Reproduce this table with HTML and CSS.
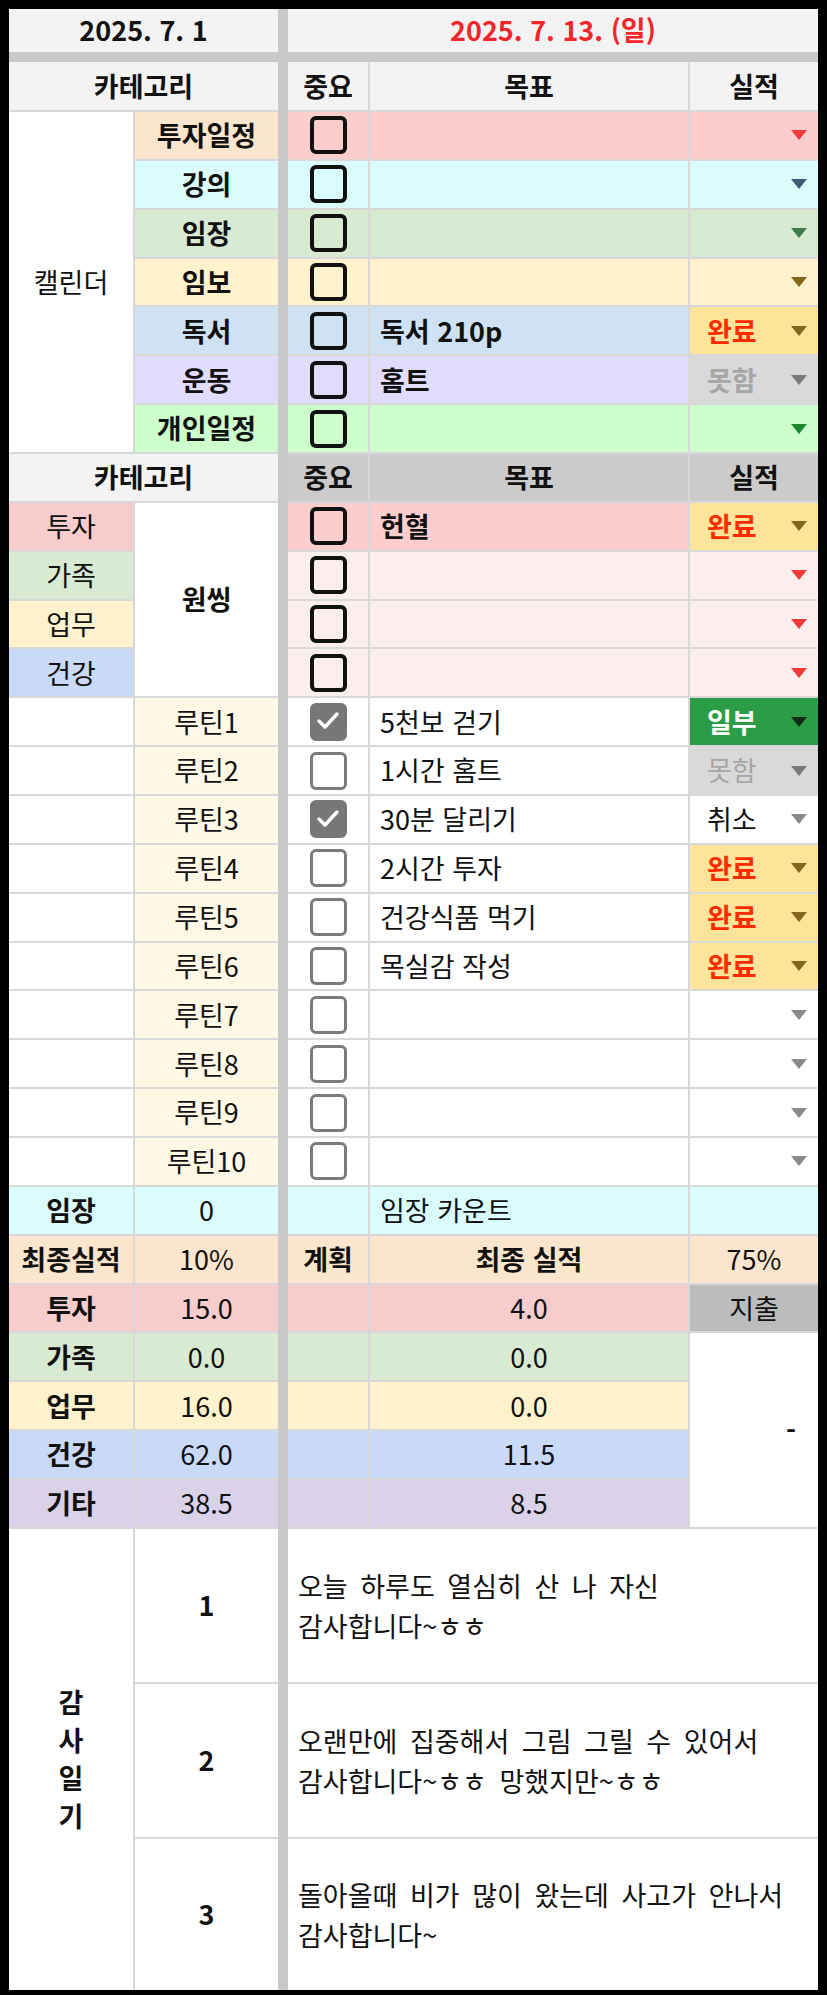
FILE: index.html
```html
<!DOCTYPE html>
<html lang="ko">
<head>
<meta charset="utf-8">
<title>2025. 7. 13</title>
<link rel="stylesheet" href="styles.css">
</head>
<body>
<div class="sheet">
  <div class="vband"></div>
  <div class="hband"></div>

  <div class="c hd b cs2">2025. 7. 1</div>
  <div class="c hd b redtxt cs3">2025. 7. 13. (일)</div>

  <div class="c hd b cs2">카테고리</div>
  <div class="c hd b">중요</div>
  <div class="c hd b">목표</div>
  <div class="c hd b">실적</div>

  <!-- calendar -->
  <div class="c white rs7">캘린더</div>

  <div class="c b peach">투자일정</div>
  <div class="c pink"><span class="cb"></span></div>
  <div class="c goal pink"></div>
  <div class="c st pink"><span></span><i class="ar red"></i></div>

  <div class="c b cyan">강의</div>
  <div class="c cyan"><span class="cb"></span></div>
  <div class="c goal cyan"></div>
  <div class="c st cyan"><span></span><i class="ar navy"></i></div>

  <div class="c b green">임장</div>
  <div class="c green"><span class="cb"></span></div>
  <div class="c goal green"></div>
  <div class="c st green"><span></span><i class="ar grn"></i></div>

  <div class="c b yellow">임보</div>
  <div class="c yellow"><span class="cb"></span></div>
  <div class="c goal yellow"></div>
  <div class="c st yellow"><span></span><i class="ar olv"></i></div>

  <div class="c b blue">독서</div>
  <div class="c blue"><span class="cb"></span></div>
  <div class="c goal b blue">독서 210p</div>
  <div class="c st ok"><span>완료</span><i class="ar olv"></i></div>

  <div class="c b lav">운동</div>
  <div class="c lav"><span class="cb"></span></div>
  <div class="c goal b lav">홈트</div>
  <div class="c st no b"><span>못함</span><i class="ar gry"></i></div>

  <div class="c b lime">개인일정</div>
  <div class="c lime"><span class="cb"></span></div>
  <div class="c goal lime"></div>
  <div class="c st lime"><span></span><i class="ar dgr"></i></div>

  <!-- second header -->
  <div class="c hd b cs2">카테고리</div>
  <div class="c hd2 b">중요</div>
  <div class="c hd2 b">목표</div>
  <div class="c hd2 b">실적</div>

  <!-- one thing -->
  <div class="c pink2">투자</div>
  <div class="c white b rs4">원씽</div>
  <div class="c pink"><span class="cb"></span></div>
  <div class="c goal b pink">헌혈</div>
  <div class="c st ok"><span>완료</span><i class="ar olv"></i></div>

  <div class="c green">가족</div>
  <div class="c rose"><span class="cb"></span></div>
  <div class="c goal rose"></div>
  <div class="c st rose"><span></span><i class="ar red"></i></div>

  <div class="c yellow">업무</div>
  <div class="c rose"><span class="cb"></span></div>
  <div class="c goal rose"></div>
  <div class="c st rose"><span></span><i class="ar red"></i></div>

  <div class="c sky">건강</div>
  <div class="c rose"><span class="cb"></span></div>
  <div class="c goal rose"></div>
  <div class="c st rose"><span></span><i class="ar red"></i></div>

  <!-- routines -->
  <div class="c white"></div>
  <div class="c cream">루틴1</div>
  <div class="c white"><span class="cb g on"><svg viewBox="0 0 38 38" width="38" height="38"><polyline points="10,19 16,25 28,12" fill="none" stroke="#fff" stroke-width="3.5" stroke-linecap="round" stroke-linejoin="round"/></svg></span></div>
  <div class="c goal white">5천보 걷기</div>
  <div class="c st part"><span>일부</span><i class="ar blk"></i></div>

  <div class="c white"></div>
  <div class="c cream">루틴2</div>
  <div class="c white"><span class="cb g"></span></div>
  <div class="c goal white">1시간 홈트</div>
  <div class="c st no"><span>못함</span><i class="ar gry"></i></div>

  <div class="c white"></div>
  <div class="c cream">루틴3</div>
  <div class="c white"><span class="cb g on"><svg viewBox="0 0 38 38" width="38" height="38"><polyline points="10,19 16,25 28,12" fill="none" stroke="#fff" stroke-width="3.5" stroke-linecap="round" stroke-linejoin="round"/></svg></span></div>
  <div class="c goal white">30분 달리기</div>
  <div class="c st white"><span>취소</span><i class="ar gry2"></i></div>

  <div class="c white"></div>
  <div class="c cream">루틴4</div>
  <div class="c white"><span class="cb g"></span></div>
  <div class="c goal white">2시간 투자</div>
  <div class="c st ok"><span>완료</span><i class="ar olv"></i></div>

  <div class="c white"></div>
  <div class="c cream">루틴5</div>
  <div class="c white"><span class="cb g"></span></div>
  <div class="c goal white">건강식품 먹기</div>
  <div class="c st ok"><span>완료</span><i class="ar olv"></i></div>

  <div class="c white"></div>
  <div class="c cream">루틴6</div>
  <div class="c white"><span class="cb g"></span></div>
  <div class="c goal white">목실감 작성</div>
  <div class="c st ok"><span>완료</span><i class="ar olv"></i></div>

  <div class="c white"></div>
  <div class="c cream">루틴7</div>
  <div class="c white"><span class="cb g"></span></div>
  <div class="c goal white"></div>
  <div class="c st white"><span></span><i class="ar gry2"></i></div>

  <div class="c white"></div>
  <div class="c cream">루틴8</div>
  <div class="c white"><span class="cb g"></span></div>
  <div class="c goal white"></div>
  <div class="c st white"><span></span><i class="ar gry2"></i></div>

  <div class="c white"></div>
  <div class="c cream">루틴9</div>
  <div class="c white"><span class="cb g"></span></div>
  <div class="c goal white"></div>
  <div class="c st white"><span></span><i class="ar gry2"></i></div>

  <div class="c white"></div>
  <div class="c cream">루틴10</div>
  <div class="c white"><span class="cb g"></span></div>
  <div class="c goal white"></div>
  <div class="c st white"><span></span><i class="ar gry2"></i></div>

  <!-- counters -->
  <div class="c b cyan">임장</div>
  <div class="c cyan">0</div>
  <div class="c cyan"></div>
  <div class="c goal cyan">임장 카운트</div>
  <div class="c cyan"></div>

  <div class="c b peach">최종실적</div>
  <div class="c peach">10%</div>
  <div class="c b peach">계획</div>
  <div class="c b peach">최종 실적</div>
  <div class="c peach">75%</div>

  <div class="c b pink2">투자</div>
  <div class="c pink2">15.0</div>
  <div class="c pink2"></div>
  <div class="c pink2">4.0</div>
  <div class="c spend">지출</div>

  <div class="c b green">가족</div>
  <div class="c green">0.0</div>
  <div class="c green"></div>
  <div class="c green">0.0</div>
  <div class="c white b rs4 dash">-</div>

  <div class="c b yellow">업무</div>
  <div class="c yellow">16.0</div>
  <div class="c yellow"></div>
  <div class="c yellow">0.0</div>

  <div class="c b sky">건강</div>
  <div class="c sky">62.0</div>
  <div class="c sky"></div>
  <div class="c sky">11.5</div>

  <div class="c b purple">기타</div>
  <div class="c purple">38.5</div>
  <div class="c purple"></div>
  <div class="c purple">8.5</div>

  <!-- gratitude -->
  <div class="c white b rs3 vert"><span>감</span><span>사</span><span>일</span><span>기</span></div>
  <div class="c white b">1</div>
  <div class="c white note cs3"><p>오늘 하루도 열심히 산 나 자신<br>감사합니다~ㅎㅎ</p></div>
  <div class="c white b">2</div>
  <div class="c white note cs3"><p>오랜만에 집중해서 그림 그릴 수 있어서<br>감사합니다~ㅎㅎ 망했지만~ㅎㅎ</p></div>
  <div class="c white b">3</div>
  <div class="c white note cs3"><p>돌아올때 비가 많이 왔는데 사고가 안나서<br>감사합니다~</p></div>
</div>
</body>
</html>
```

FILE: styles.css
```css
html, body {
  margin: 0;
  padding: 0;
  background: #000;
}

.sheet {
  margin: 9px 9px 0 9px;
  width: 809px;
  display: grid;
  grid-template-columns: 124px 143px 6px 80px 318px 128px;
  grid-template-rows: 43px 6px 48px repeat(29, 46.86px) 153px 153px 151px;
  gap: 2px;
  background: #d8d8d8;
  font-family: "Noto Sans CJK KR", "Noto Sans", sans-serif;
  font-size: 27px;
  line-height: 1.2;
  color: #111;
}

.vband {
  grid-column: 3;
  grid-row: 1 / -1;
  margin: 0 -2px;
  background: #c9c9c9;
}

.hband {
  grid-column: 1 / -1;
  grid-row: 2;
  margin: -2px 0;
  background: #c9c9c9;
}

.c {
  display: flex;
  align-items: center;
  justify-content: center;
  min-width: 0;
  overflow: hidden;
  white-space: nowrap;
}

.b { font-weight: 700; }
.cs2 { grid-column: span 2; }
.cs3 { grid-column: span 3; }
.rs3 { grid-row: span 3; }
.rs4 { grid-row: span 4; }
.rs7 { grid-row: span 7; }

.hd { background: #f3f3f3; }
.hd2 { background: #cbcbcb; }
.redtxt { color: #f2262a; }

.white { background: #fff; }
.peach { background: #fce5cd; }
.pink { background: #fbcdcd; }
.pink2 { background: #f6cccc; }
.rose { background: #fdeeee; }
.cyan { background: #dbfcfd; }
.green { background: #d9ead3; }
.yellow { background: #fff2cc; }
.blue { background: #cfe2f3; }
.sky { background: #c9daf8; }
.lav { background: #e1dcfb; }
.lime { background: #ccffcc; }
.purple { background: #d9d2e9; }
.cream { background: #fef8e4; }
.spend { background: #bcbcbc; }

.goal {
  justify-content: flex-start;
  padding-left: 10px;
}

.st {
  justify-content: space-between;
  padding: 0 11px 0 17px;
}

.dash {
  justify-content: flex-end;
  padding-right: 22px;
}

.ok { background: #fee39a; color: #ff2a00; font-weight: 700; }
.no { background: #d9d9d9; color: #a6a6a6; }
.part { background: #2b9d47; color: #fff; font-weight: 700; }

.ar {
  display: block;
  width: 0;
  height: 0;
  border-left: 8px solid transparent;
  border-right: 8px solid transparent;
  border-top: 10px solid #777;
}
.ar.red { border-top-color: #f5393b; }
.ar.navy { border-top-color: #3a5d78; }
.ar.grn { border-top-color: #3f7c4b; }
.ar.olv { border-top-color: #836718; }
.ar.dgr { border-top-color: #19892b; }
.ar.gry { border-top-color: #7a7a7a; }
.ar.gry2 { border-top-color: #8a8a8a; }
.ar.blk { border-top-color: #0d2e16; }

.cb {
  display: block;
  width: 37px;
  height: 38px;
  box-sizing: border-box;
  border: 4px solid #111;
  border-radius: 6px;
}
.cb.g {
  border: 3.5px solid #7b7b7b;
  background: #fff;
}
.cb.on {
  background: #777;
  border-color: #777;
  position: relative;
}
.cb.on svg {
  position: absolute;
  left: -3.5px;
  top: -3.5px;
}

.vert {
  flex-direction: column;
  line-height: 38px;
}
.vert span { display: block; }

.note {
  justify-content: flex-start;
  padding-left: 10px;
  white-space: normal;
  font-size: 27px;
  word-spacing: 5px;
}
.note p {
  margin: 2px 0 0 0;
  line-height: 40px;
}
```
